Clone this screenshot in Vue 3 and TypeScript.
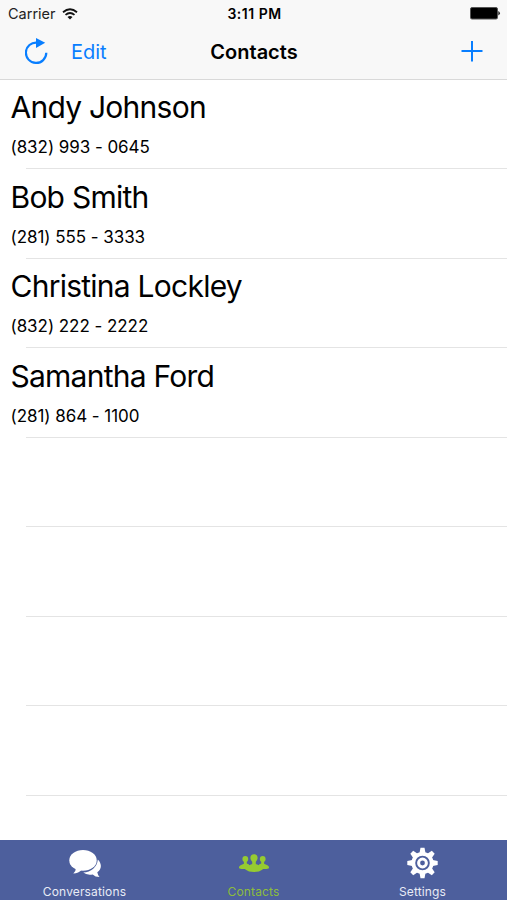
<script setup lang="ts">
interface Contact {
  name: string
  phone: string
}

const contacts: Contact[] = [
  { name: 'Andy Johnson', phone: '(832) 993 - 0645' },
  { name: 'Bob Smith', phone: '(281) 555 - 3333' },
  { name: 'Christina Lockley', phone: '(832) 222 - 2222' },
  { name: 'Samantha Ford', phone: '(281) 864 - 1100' },
]
const emptyRows = 4
const teeth = [0, 45, 90, 135, 180, 225, 270, 315]
</script>

<template>
  <div class="screen">
    <header class="top">
      <div class="status">
        <div class="carrier">
          <span>Carrier</span>
          <svg class="wifi" width="16" height="12" viewBox="0 0 16 12" fill="none" stroke="#111" stroke-width="1.8">
            <path d="M1 4.2Q8-1.8 15 4.2" />
            <path d="M3.5 6.9Q8 3 12.5 6.9" />
            <path d="M8 11.5L5.5 8.9Q8 7 10.5 8.9Z" fill="#111" stroke="none" />
          </svg>
        </div>
        <span class="time">3:11 PM</span>
        <svg class="battery" width="31" height="13" viewBox="0 0 31 13">
          <rect x="0.5" y="0.5" width="27" height="11.5" rx="1.5" fill="#000" stroke="#555" />
          <path d="M28.3 4Q31.5 6.2 28.3 8.500Z" fill="#222" />
        </svg>
      </div>
      <nav class="nav">
        <div class="left">
          <svg width="24" height="28" viewBox="0 0 24 28">
            <path d="M12 4.600A10.200 10.200 0 1 0 21.300 14.800" fill="none" stroke="#087eff" stroke-width="2.200" />
            <path d="M11 0L20.200 4.800L11 10Z" fill="#087eff" />
          </svg>
          <span class="edit">Edit</span>
        </div>
        <h1 class="title">Contacts</h1>
        <svg class="add" width="22" height="22" viewBox="0 0 22 22" stroke="#087eff" stroke-width="2">
          <path d="M0.500 10H21.500M11 0V20.500" />
        </svg>
      </nav>
    </header>

    <main class="list">
      <div v-for="c in contacts" :key="c.name" class="row">
        <div class="name">{{ c.name }}</div>
        <div class="phone">{{ c.phone }}</div>
      </div>
      <div v-for="n in emptyRows" :key="n" class="row"></div>
    </main>

    <footer class="tabs">
      <div class="tab">
        <svg width="34" height="34" viewBox="0 -4 34 34">
          <path d="M29.800 9.500C34.300 14 33.600 19.300 29.300 22.300Q29.700 25 31.500 26.900Q27.200 26.900 24.700 24.400Q18.500 25.300 15.200 22.600C23 22.300 29.300 17 29.800 9.500Z" fill="#fff" />
          <ellipse cx="15" cy="10.400" rx="13.700" ry="10.300" fill="#fff" />
          <path d="M8 17.500Q8 21.200 5.300 23.600Q10.500 23.400 14 19.500Z" fill="#fff" />
        </svg>
        <span>Conversations</span>
      </div>
      <div class="tab active">
        <svg width="34" height="34" viewBox="0 0 34 34" fill="#96cb31">
          <circle cx="8.300" cy="13" r="2.900" />
          <circle cx="25.700" cy="13" r="2.900" />
          <path d="M6.900 14.500H9.800V17.500L12 18.500V23H4.500Q1.800 22.800 1.900 21.700Q2 20 3.600 19.200L6.900 17.800Z" />
          <path d="M27.100 14.500H24.200V17.500L22 18.500V23H29.500Q32.200 22.800 32.100 21.700Q32 20 30.400 19.200L27.100 17.800Z" />
          <path d="M15.200 18V15.700C12.300 13 12.800 8.200 17 8.200C21.200 8.200 21.700 13 18.800 15.700V18L23.300 19.700Q26 20.800 25.700 23.500Q22.500 26 17 26Q11.500 26 8.300 23.500Q8 20.800 10.700 19.700Z" />
        </svg>
        <span>Contacts</span>
      </div>
      <div class="tab">
        <svg width="34" height="34" viewBox="-16.500 -17 34 34">
          <g fill="#fff">
            <path v-for="a in teeth" :key="a" d="M-3.200-9L-2-15.200H2L3.200-9Z" :transform="`rotate(${a})`" />
          </g>
          <circle r="9.200" fill="none" stroke="#fff" stroke-width="3.800" />
          <circle r="3.900" fill="none" stroke="#fff" stroke-width="3" />
        </svg>
        <span>Settings</span>
      </div>
    </footer>
  </div>
</template>

<style>
body {
  margin: 0;
}
</style>

<style scoped>
.screen {
  width: 507px;
  height: 900px;
  display: flex;
  flex-direction: column;
  overflow: hidden;
  background: #fff;
  color: #000;
  font-family: Inter, "Liberation Sans", sans-serif;
}
.top {
  box-sizing: border-box;
  height: 79.500px;
  flex: none;
  background: #f8f8f8;
  border-bottom: 1px solid #d9d9d9;
}
.status {
  height: 27px;
  display: grid;
  grid-template-columns: 1fr auto 1fr;
  align-items: center;
  padding: 0 6px 0 8px;
  font-size: 14.500px;
}
.carrier {
  display: flex;
  align-items: center;
  gap: 6px;
  color: #222;
}
.time {
  font-weight: 600;
  font-size: 14px;
  letter-spacing: 0.500px;
}
.battery {
  justify-self: end;
}
.nav {
  height: 50px;
  display: grid;
  grid-template-columns: 1fr auto 1fr;
  align-items: center;
  padding: 0 24px 0 25px;
}
.left {
  display: flex;
  align-items: center;
  gap: 22px;
}
.edit {
  color: #087eff;
  font-size: 20px;
}
.title {
  margin: 0;
  font-size: 20px;
  font-weight: 600;
}
.add {
  justify-self: end;
}
.list {
  flex: 1;
  min-height: 0;
}
.row {
  box-sizing: border-box;
  height: 89.550px;
  padding: 7.500px 0 0 10.500px;
  background: linear-gradient(#e4e4e4, #e4e4e4) 26px 100% / 100% 1px no-repeat;
}
.name {
  font-size: 30px;
  line-height: 40px;
  letter-spacing: -0.750px;
}
.phone {
  margin-top: 9px;
  font-size: 17px;
  line-height: 22px;
  letter-spacing: -0.050px;
}
.tabs {
  height: 60px;
  flex: none;
  display: grid;
  grid-template-columns: repeat(3, 1fr);
  background: #4d5f9d;
}
.tab {
  display: flex;
  flex-direction: column;
  align-items: center;
  justify-content: space-between;
  padding: 6px 0 1px;
  color: #e8ebf5;
  font-size: 12px;
  line-height: 15px;
  letter-spacing: 0.150px;
}
.tab.active {
  color: #8cbd3c;
}
</style>
